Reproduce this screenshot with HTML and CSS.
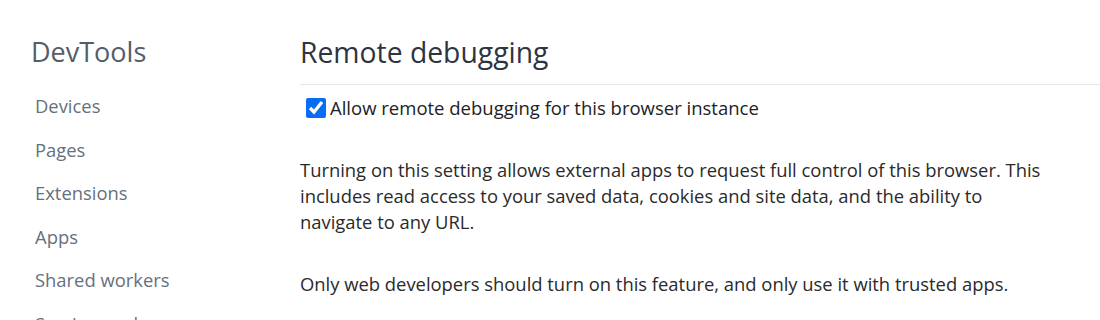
FILE: index.html
```html
<!DOCTYPE html>
<html lang="en">
<head>
    <meta charset="UTF-8">
    <title>DevTools - Remote debugging</title>
    <link rel="stylesheet" href="styles.css">
</head>
<body>

    <div class="page">
        <!-- side navigation -->
        <nav class="sidebar">
            <h1 class="brand">DevTools</h1>
            <ul class="nav-list">
                <li><a href="#">Devices</a></li>
                <li><a href="#">Pages</a></li>
                <li><a href="#">Extensions</a></li>
                <li><a href="#">Apps</a></li>
                <li><a href="#">Shared workers</a></li>
                <li><a href="#">Service workers</a></li>
            </ul>
        </nav>

        <main class="content">
            <h2 class="title">Remote debugging</h2>
            <label class="toggle">
                <input type="checkbox" checked>
                <span>Allow remote debugging for this browser instance</span>
            </label>
            <p class="note">Turning on this setting allows external apps to request full control of this browser. This includes read access to your saved data, cookies and site data, and the ability to navigate to any URL.</p>
            <p class="note">Only web developers should turn on this feature, and only use it with trusted apps.</p>
        </main>
    </div>

</body>
</html>
```

FILE: styles.css
```css
body {
    margin: 0;
    font-family: 'Open Sans', 'Noto Sans', sans-serif;
    background: #fff;
    color: #333;
    height: 320px;
    overflow: hidden;
}
.page {
    display: flex;
}
.sidebar {
    width: 269px;
    padding-left: 31px;
    flex-shrink: 0;
}
.brand {
    margin: 33px 0 0 0;
    font-size: 27px;
    font-weight: 400;
    line-height: 38px;
    color: #545d69;
}
.nav-list {
    list-style: none;
    margin: 22px 0 0 0;
    padding: 0 0 0 4px;
}
.nav-list li {
    height: 43.5px;
    line-height: 26px;
}
.nav-list a {
    font-size: 18.4px;
    color: #66707d;
    text-decoration: none;
}
.content {
    flex: 1;
}
.title {
    margin: 33px 0 0 0;
    padding-bottom: 13px;
    font-size: 28.3px;
    font-weight: 400;
    line-height: 38px;
    color: #2e3440;
    border-bottom: 1px solid #e6e6e6;
}
.toggle {
    display: flex;
    align-items: center;
    margin: 10px 0 0 6px;
    font-size: 18.5px;
    line-height: 26px;
    color: #222;
}
.toggle input {
    width: 20px;
    height: 20px;
    margin: 0 4px 0 0;
    accent-color: #0a6cf5;
}
.note {
    margin: 36px 0 0 0;
    max-width: 752px;
    font-size: 18.4px;
    line-height: 26px;
    color: #2a2a2a;
}
```
